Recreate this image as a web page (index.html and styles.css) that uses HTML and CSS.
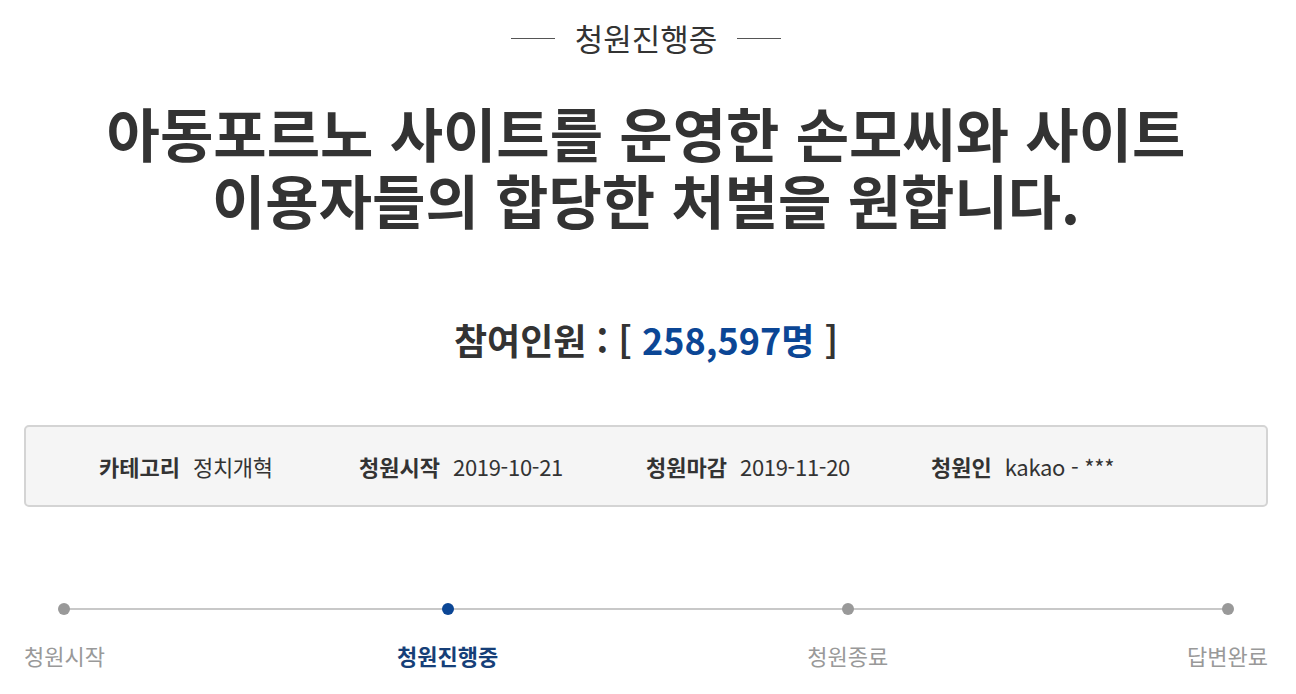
FILE: index.html
```html
<!DOCTYPE html>
<html lang="ko">
<head>
<meta charset="utf-8">
<link rel="stylesheet" href="styles.css">
</head>
<body>
<div class="page">
  <div class="status"><span class="rule"></span><span class="status-text">청원진행중</span><span class="rule"></span></div>
  <h1 class="title"><span class="title-line">아동포르노 사이트를 운영한 손모씨와 사이트</span><span class="title-line">이용자들의 합당한 처벌을 원합니다.</span></h1>
  <div class="count">참여인원 : [ <span class="num">258,597명</span> ]</div>
  <div class="info">
    <div class="item"><span class="label">카테고리</span><span class="value">정치개혁</span></div>
    <div class="item"><span class="label">청원시작</span><span class="value">2019-10-21</span></div>
    <div class="item"><span class="label">청원마감</span><span class="value">2019-11-20</span></div>
    <div class="item"><span class="label">청원인</span><span class="value">kakao - ***</span></div>
  </div>
  <div class="steps">
    <div class="step s1"><span class="dot"></span><span class="step-label">청원시작</span></div>
    <div class="step s2 active"><span class="dot"></span><span class="step-label">청원진행중</span></div>
    <div class="step s3"><span class="dot"></span><span class="step-label">청원종료</span></div>
    <div class="step s4"><span class="dot"></span><span class="step-label">답변완료</span></div>
  </div>
</div>
</body>
</html>
```
FILE: styles.css
```css
html, body { margin: 0; padding: 0; background: #fff; }
body { font-family: "Noto Sans CJK KR", "Noto Sans", sans-serif; color: #333; }
.page { width: 1244px; margin-left: 24px; }
.status { display: flex; justify-content: center; align-items: center; gap: 20px; padding-top: 18px; height: 40px; }
.rule { display: block; width: 44px; height: 1px; background: #555; }
.status-text { font-size: 31px; line-height: 40px; color: #333; }
.title { margin: 41px 0 0; text-align: center; font-size: 58px; font-weight: 700; color: #333; display: flex; flex-direction: column; align-items: center; }
.title-line { display: block; height: 67px; line-height: 67px; white-space: nowrap; }
.count { margin-top: 81px; text-align: center; font-size: 36px; line-height: 50px; font-weight: 700; color: #333; }
.count .num { color: #0b4695; }
.info { margin-top: 61px; box-sizing: border-box; height: 82px; background: #f5f5f5; border: 2px solid #d4d4d4; border-radius: 5px; display: grid; grid-template-columns: 260px 287px 285px auto; align-items: center; padding-left: 73px; }
.item { display: flex; align-items: baseline; gap: 13px; font-size: 22px; }
.label { font-weight: 700; color: #333; }
.value { color: #333; letter-spacing: -0.3px; }
.steps { position: relative; margin-top: 96px; display: flex; }
.steps::before { content: ""; position: absolute; left: 40px; right: 40px; top: 5px; height: 2px; background: #c8c8c8; }
.step { display: flex; flex-direction: column; align-items: center; gap: 25px; position: relative; }
.s2 { margin-left: 292px; }
.s3 { margin-left: 309px; }
.s4 { margin-left: auto; }
.dot { width: 12px; height: 12px; border-radius: 50%; background: #999; }
.step-label { font-size: 22px; line-height: 30px; color: #999; }
.step.active .dot { background: #0b4695; }
.step.active .step-label { color: #163f78; font-weight: 700; }
```
